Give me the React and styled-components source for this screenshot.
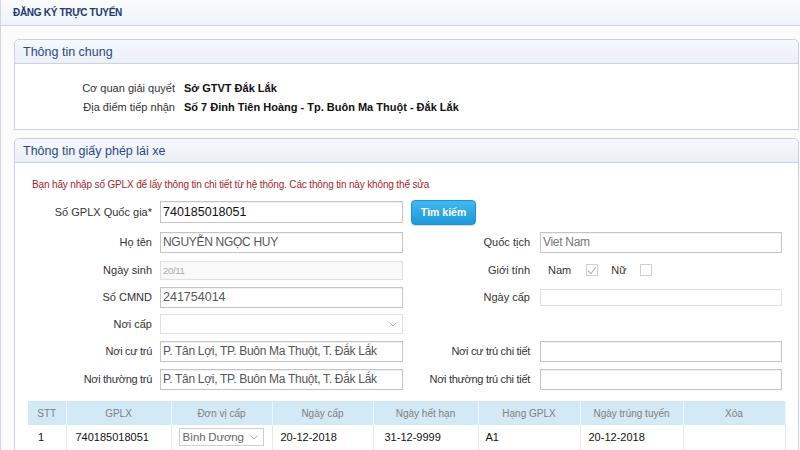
import React from "react";
import styled, { createGlobalStyle } from "styled-components";

const Global = createGlobalStyle`
  html, body { margin: 0; padding: 0; background: #ffffff; }
  body { font-family: "Liberation Sans", Arial, sans-serif; }
  * { box-sizing: border-box; }
`;

const Page = styled.div`
  width: 800px;
  height: 450px;
  overflow: hidden;
  background: #fbfbfb;
  border-left: 1px solid #d3d6da;
`;

const TopBar = styled.div`
  height: 26px;
  display: flex;
  align-items: center;
  padding-left: 12px;
  background: linear-gradient(#fafbfd, #eef2f7);
  border-bottom: 1px solid #ccd4df;
`;

const TopTitle = styled.h1`
  margin: 0;
  font-size: 10px;
  font-weight: bold;
  letter-spacing: -0.3px;
  color: #1d3a72;
`;

const Content = styled.div`
  padding: 13px 1px 0 13px;
  display: flex;
  flex-direction: column;
  gap: 8px;
`;

const Panel = styled.section`
  background: #ffffff;
  border: 1px solid #c9d1dc;
  border-radius: 5px 5px 0 0;
`;

const PanelHeader = styled.div`
  height: 24px;
  display: flex;
  align-items: center;
  padding-left: 8px;
  background: linear-gradient(#f6f8fc, #ebf0f7);
  border-bottom: 1px solid #cbd3de;
  border-radius: 5px 5px 0 0;
  font-size: 12.5px;
  color: #2a4a84;
`;

const InfoGrid = styled.div`
  display: grid;
  grid-template-columns: 160px auto;
  column-gap: 9px;
  grid-auto-rows: 19px;
  align-items: center;
  padding: 14px 0 13px 0;
  font-size: 11px;
`;

const InfoLabel = styled.div`
  text-align: right;
  color: #333;
`;

const InfoValue = styled.div`
  font-weight: bold;
  color: #111;
`;

const Body2 = styled.div`
  padding: 15px 0 0 0;
`;

const Notice = styled.p`
  margin: 0 0 7px 17px;
  font-size: 10px;
  letter-spacing: -0.15px;
  line-height: 14px;
  color: #a3262a;
`;

const FormGrid = styled.div`
  display: grid;
  grid-template-columns: 145px 243px 137px 242px;
  grid-template-rows: 26px 24px 22px 22px 22px 22px 24px;
  row-gap: 5px;
  align-items: center;
`;

const Label = styled.div`
  text-align: right;
  padding-right: ${(p) => p.$pr || 8}px;
  font-size: 11px;
  color: #333;
  white-space: nowrap;
  letter-spacing: ${(p) => (p.$tight ? "-0.3px" : "0")};
`;

const Input = styled.div`
  height: ${(p) => p.$h || 21}px;
  border: 1px solid ${(p) => (p.$light ? "#e0e0e0" : "#c4c4c4")};
  background: ${(p) => (p.$disabled ? "#f9f9f9" : "#fff")};
  box-shadow: ${(p) => (p.$light ? "none" : "inset 0 1px 1px rgba(0,0,0,0.06)")};
  display: flex;
  align-items: center;
  padding-left: 2px;
  font-size: ${(p) => p.$fs || 12}px;
  letter-spacing: ${(p) => (p.$digits ? "0" : "-0.3px")};
  color: ${(p) => p.$color || "#555"};
  white-space: nowrap;
  overflow: hidden;
`;

const SelectBox = styled(Input)`
  justify-content: space-between;
  padding-right: 5px;
`;

const SearchButton = styled.button`
  justify-self: start;
  margin-left: 8px;
  width: 65px;
  height: 25px;
  border: 1px solid #1c91d2;
  border-radius: 4px;
  background: linear-gradient(#41b9f0, #1d98da);
  color: #fff;
  font-family: "Liberation Sans", Arial, sans-serif;
  font-weight: bold;
  font-size: 10.5px;
  box-shadow: 0 1px 1px rgba(0,0,0,0.15);
`;

const GenderRow = styled.div`
  display: flex;
  align-items: center;
  padding-left: 8px;
  font-size: 11px;
  color: #333;
`;

const GenderText = styled.span`
  margin-right: ${(p) => p.$mr}px;
`;

const Check = styled.span`
  width: 12px;
  height: 12px;
  border: 1px solid #cfcfcf;
  background: #fff;
  display: inline-flex;
  align-items: center;
  justify-content: center;
  margin-right: ${(p) => p.$mr || 0}px;
`;

const Table = styled.table`
  margin: 10px 0 0 13px;
  width: 757px;
  border-collapse: collapse;
  table-layout: fixed;
  font-size: 11px;
`;

const Th = styled.th`
  height: 24px;
  background: #d3e9f5;
  color: #808080;
  font-weight: normal;
  font-size: 10px;
  text-align: center;
  border-right: 1px solid #eef7fc;
`;

const Td = styled.td`
  height: 25px;
  padding-left: ${(p) => p.$pl || 8}px;
  color: #111;
  border-right: 1px solid #e8e8e8;
  border-bottom: 1px solid #e8e8e8;
  white-space: nowrap;
`;

const CellSelect = styled.div`
  width: 85px;
  height: 18px;
  border: 1px solid #cfcfcf;
  display: flex;
  align-items: center;
  justify-content: space-between;
  padding: 0 5px 0 3px;
  font-size: 11.5px;
  letter-spacing: -0.2px;
  color: #666;
`;

const Chevron = () => (
  <svg width="8" height="5" viewBox="0 0 8 5">
    <polyline points="0.5,0.5 4,4 7.5,0.5" fill="none" stroke="#b0b0b0" strokeWidth="1" />
  </svg>
);

const Tick = () => (
  <svg width="10" height="9" viewBox="0 0 10 9">
    <polyline points="1,4.5 4,7.5 9,1" fill="none" stroke="#b8b8b8" strokeWidth="1.2" />
  </svg>
);

const cols = [
  ["STT", 38],
  ["GPLX", 105],
  ["Đơn vị cấp", 101],
  ["Ngày cấp", 101],
  ["Ngày hết hạn", 105],
  ["Hạng GPLX", 102],
  ["Ngày trúng tuyến", 103],
  ["Xóa", 102],
];

export default function App() {
  return (
    <>
      <Global />
      <Page>
        <TopBar>
          <TopTitle>ĐĂNG KÝ TRỰC TUYẾN</TopTitle>
        </TopBar>
        <Content>
          <Panel>
            <PanelHeader>Thông tin chung</PanelHeader>
            <InfoGrid>
              <InfoLabel>Cơ quan giải quyết</InfoLabel>
              <InfoValue>Sở GTVT Đắk Lắk</InfoValue>
              <InfoLabel>Địa điểm tiếp nhận</InfoLabel>
              <InfoValue>Số 7 Đinh Tiên Hoàng - Tp. Buôn Ma Thuột - Đắk Lắk</InfoValue>
            </InfoGrid>
          </Panel>
          <Panel>
            <PanelHeader>Thông tin giấy phép lái xe</PanelHeader>
            <Body2>
              <Notice>
                Bạn hãy nhập số GPLX để lấy thông tin chi tiết từ hệ thống. Các thông tin này không thể sửa
              </Notice>
              <FormGrid>
                <Label>Số GPLX Quốc gia*</Label>
                <Input $h={22} $fs={12.5} $digits $color="#111">740185018051</Input>
                <SearchButton>Tìm kiếm</SearchButton>
                <div />

                <Label>Họ tên</Label>
                <Input $h={21}>NGUYỄN NGỌC HUY</Input>
                <Label $pr={10}>Quốc tịch</Label>
                <Input $h={21} $color="#777">Viet Nam</Input>

                <Label>Ngày sinh</Label>
                <Input $h={19} $light $disabled $fs={9.5} $color="#aaa">20/11</Input>
                <Label $pr={10}>Giới tính</Label>
                <GenderRow>
                  <GenderText $mr={15}>Nam</GenderText>
                  <Check $mr={13}><Tick /></Check>
                  <GenderText $mr={13}>Nữ</GenderText>
                  <Check />
                </GenderRow>

                <Label>Số CMND</Label>
                <Input $h={21} $fs={12.5} $digits>241754014</Input>
                <Label $pr={10}>Ngày cấp</Label>
                <Input $h={17} $light />

                <Label>Nơi cấp</Label>
                <SelectBox $h={20} $light><span /><Chevron /></SelectBox>
                <div />
                <div />

                <Label $tight>Nơi cư trú</Label>
                <Input $h={21}>P. Tân Lợi, TP. Buôn Ma Thuột, T. Đắk Lắk</Input>
                <Label $pr={10} $tight>Nơi cư trú chi tiết</Label>
                <Input $h={21} />

                <Label $tight>Nơi thường trú</Label>
                <Input $h={21}>P. Tân Lợi, TP. Buôn Ma Thuột, T. Đắk Lắk</Input>
                <Label $pr={10} $tight>Nơi thường trú chi tiết</Label>
                <Input $h={21} />
              </FormGrid>
              <Table>
                <colgroup>
                  {cols.map(([n, w]) => (
                    <col key={n} style={{ width: w }} />
                  ))}
                </colgroup>
                <thead>
                  <tr>
                    {cols.map(([n]) => (
                      <Th key={n}>{n}</Th>
                    ))}
                  </tr>
                </thead>
                <tbody>
                  <tr>
                    <Td $pl={10}>1</Td>
                    <Td $pl={9}>740185018051</Td>
                    <Td $pl={7}>
                      <CellSelect>
                        <span>Bình Dương</span>
                        <Chevron />
                      </CellSelect>
                    </Td>
                    <Td>20-12-2018</Td>
                    <Td $pl={11}>31-12-9999</Td>
                    <Td $pl={7}>A1</Td>
                    <Td>20-12-2018</Td>
                    <Td />
                  </tr>
                </tbody>
              </Table>
            </Body2>
          </Panel>
        </Content>
      </Page>
    </>
  );
}
